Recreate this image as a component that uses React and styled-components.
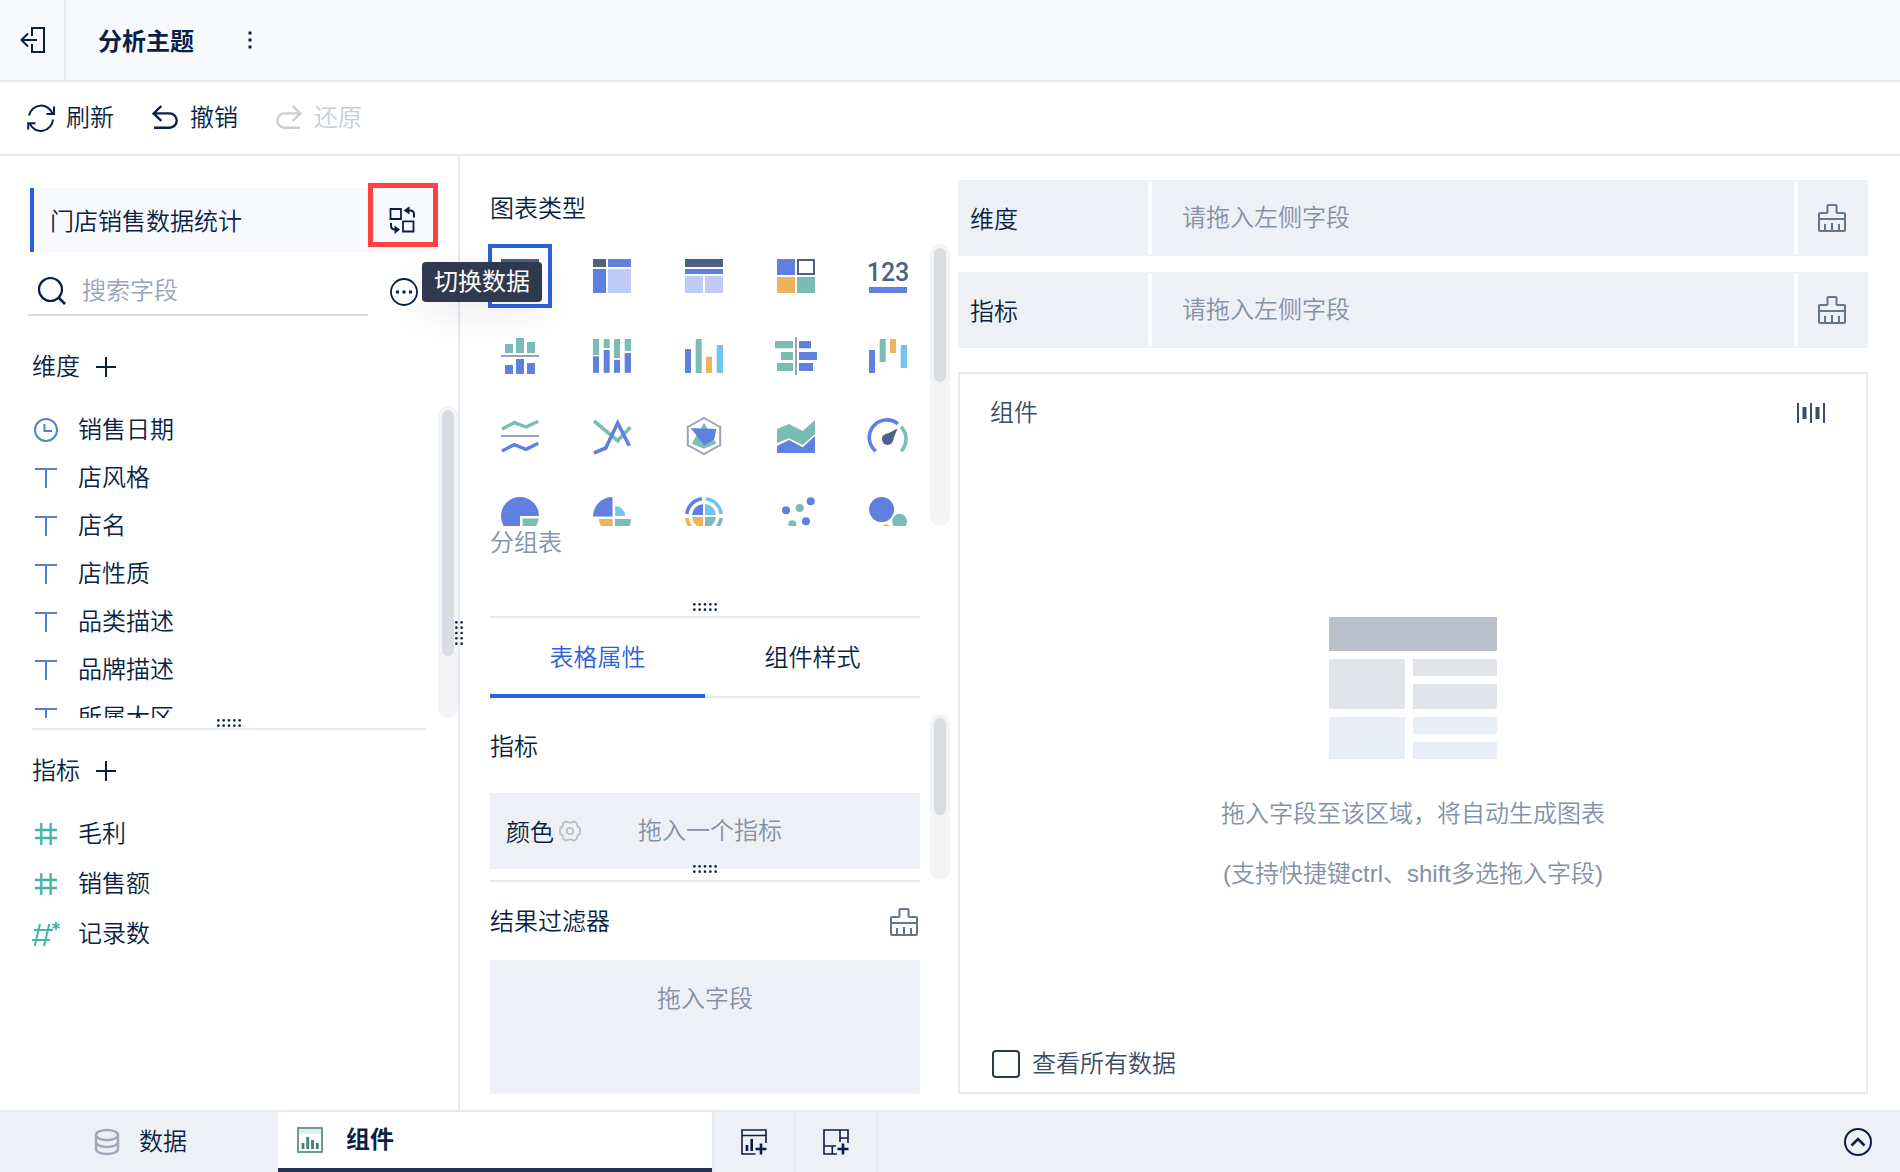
import React, { useState } from 'react';
import styled, { createGlobalStyle } from 'styled-components';

const GlobalStyle = createGlobalStyle`
  * {
    box-sizing: border-box;
  }

  body {
    margin: 0;
    background: #ffffff;
    color: #0a1f44;
    font-family: "Liberation Sans", "Noto Sans CJK SC", sans-serif;
    font-size: 24px;
    font-weight: 350;
    line-height: 32px;
  }

  button, input {
    font: inherit;
    color: inherit;
  }

  button {
    display: flex;
    align-items: center;
    padding: 0;
    border: none;
    background: none;
    cursor: pointer;
  }

  svg {
    display: block;
    flex: none;
    overflow: visible;
  }

  h1, h2, p, ul {
    margin: 0;
    padding: 0;
    font-size: 24px;
    font-weight: inherit;
  }
`;

const Page = styled.div`
  display: flex;
  flex-direction: column;
  min-height: 100vh;
`;

const Header = styled.header`
  display: flex;
  height: 82px;
  background: #f8f9fd;
  border-bottom: 2px solid #e6e9f0;
`;

const BackButton = styled.button`
  width: 66px;
  padding-left: 20px;
  border-right: 2px solid #e6e9f0;
`;

const Title = styled.h1`
  align-self: center;
  margin-left: 32px;
  padding-top: 4px;
  font-weight: 700;
`;

const MoreButton = styled.button`
  margin-left: 52px;
`;

const Toolbar = styled.div`
  display: flex;
  gap: 37px;
  height: 74px;
  padding-left: 27px;
  border-bottom: 2px solid #e6e9f0;
`;

const ToolButton = styled.button`
  gap: 11px;

  &:disabled {
    color: #c9cdd6;
    cursor: default;
  }
`;

const Body = styled.main`
  display: flex;
  flex: 1;
`;

/* Painel da esquerda */
const SidePanel = styled.aside`
  position: relative;
  display: flex;
  flex-direction: column;
  flex: none;
  width: 460px;
  padding-top: 32px;
  border-right: 2px solid #e6e9f0;
`;

const Source = styled.div`
  position: relative;
  display: flex;
  align-items: center;
  justify-content: space-between;
  height: 64px;
  margin: 0 24px 0 30px;
  padding: 0 18px 0 16px;
  background: #f8f9fd;
  border-left: 4px solid #2c60db;

  span {
    padding-top: 4px;
  }
`;

const Highlight = styled.div`
  position: absolute;
  top: -5px;
  right: -4px;
  width: 70px;
  height: 64px;
  border: 5px solid #fe4242;
  pointer-events: none;
`;

const Tooltip = styled.div`
  position: absolute;
  top: 74px;
  left: 388px;
  z-index: 2;
  padding: 4px 12px;
  border-radius: 4px;
  background: #2f3a4e;
  color: #ffffff;
  font-weight: 400;
  white-space: nowrap;
  box-shadow: 0 12px 36px rgba(20, 30, 60, 0.08);
`;

const SearchRow = styled.div`
  display: flex;
  justify-content: space-between;
  margin: 0 40px 0 28px;
`;

const SearchBox = styled.label`
  display: flex;
  align-items: center;
  gap: 16px;
  width: 340px;
  height: 64px;
  padding: 16px 0 0 10px;
  border-bottom: 2px solid #d9dde6;

  input {
    width: 260px;
    padding: 0;
    border: none;
    outline: none;
    background: none;
  }

  input::placeholder {
    color: #9aa3b4;
    opacity: 1;
  }
`;

const RoundButton = styled.button`
  padding-top: 16px;
`;

const GroupTitle = styled.div`
  display: flex;
  align-items: center;
  gap: 16px;
  padding: ${(props) => props.$padding};
`;

const ScrollRow = styled.div`
  display: flex;
  height: ${(props) => props.$height}px;
`;

const FieldList = styled.ul`
  flex: 1;
  overflow: hidden;
  list-style: none;
`;

const Field = styled.li`
  display: flex;
  align-items: center;
  gap: 20px;
  height: ${(props) => props.$height}px;
  padding-left: 34px;
`;

const Track = styled.div`
  flex: none;
  width: 20px;
  padding: 4px;
  border-radius: 10px;
  background: #f2f4f6;
`;

const Thumb = styled.div`
  height: ${(props) => props.$height}px;
  border-radius: 6px;
  background: #d9dce1;
`;

const Divider = styled.div`
  position: relative;
  height: 2px;
  margin: ${(props) => props.$margin};
  background: #e6e9f0;
`;

const Grip = styled.div`
  position: absolute;
  bottom: ${(props) => props.$lift}px;
  left: 50%;
  margin-left: -12px;
`;

const SideGrip = styled.div`
  position: absolute;
  top: 465px;
  right: -5px;
  z-index: 1;
`;

/* Painel do meio */
const ConfigPanel = styled.section`
  display: flex;
  flex-direction: column;
  flex: none;
  width: 498px;
  padding: 37px 8px 0 30px;
`;

const ChartGrid = styled.div`
  display: grid;
  grid-template-columns: repeat(5, 64px);
  grid-auto-rows: 64px;
  gap: 16px 28px;
  margin: 0 10px 0 -2px;
  overflow: hidden;
`;

const ChartButton = styled.button`
  justify-content: center;
  border: 4px solid ${(props) => (props.$active ? '#2c60db' : 'transparent')};
`;

const ChartName = styled.p`
  padding: 1px 0 57px;
  color: #8591a7;
`;

const Tabs = styled.div`
  display: flex;
  height: 80px;
  margin: 0 30px 16px 0;
`;

const Tab = styled.button`
  flex: 1;
  justify-content: center;
  color: ${(props) => (props.$active ? '#2c60db' : '#0a1f44')};
  box-shadow: inset 0 ${(props) => (props.$active ? '-4px #2c60db' : '-2px #e6e9f0')};
`;

const Props = styled.div`
  flex: 1;
  margin-right: 10px;

  h2 {
    padding: 17px 0 30px;
  }
`;

const ColorRow = styled.div`
  display: flex;
  align-items: center;
  height: 76px;
  padding-left: 16px;
  background: #edf0f5;

  button {
    margin: 0 57px 0 5px;
  }
`;

const ColorLabel = styled.span`
  padding-top: 3px;
`;

const Hint = styled.span`
  color: #8591a7;
`;

const FilterHead = styled.div`
  display: flex;
  align-items: center;
  justify-content: space-between;
  height: 78px;
  margin-right: 32px;
  padding-top: 2px;
`;

const FilterDrop = styled.div`
  flex: 1;
  min-height: 134px;
  margin: 0 30px 16px 0;
  padding-top: 23px;
  background: #edf0f5;
  text-align: center;
`;

/* Painel da direita */
const Stage = styled.section`
  display: flex;
  flex-direction: column;
  flex: 1;
  padding: 24px 32px 16px 0;
`;

const DropRow = styled.div`
  display: flex;
  height: 76px;
  margin-bottom: 16px;
  padding: 1px 0;
  background: #edf0f5;
`;

const DropLabel = styled.div`
  display: flex;
  align-items: center;
  width: 190px;
  padding: 4px 0 0 12px;
`;

const DropArea = styled.div`
  display: flex;
  flex: 1;
  align-items: center;
  padding-left: 30px;
  border: solid #ffffff;
  border-width: 0 4px;
`;

const ClearButton = styled.button`
  justify-content: center;
  width: 70px;
  padding-right: 2px;
`;

const Card = styled.div`
  display: flex;
  flex-direction: column;
  flex: 1;
  margin-top: 8px;
  padding: 23px 30px 12px 30px;
  border: 2px solid #e6e9f0;
  color: #3d4c67;
`;

const CardHead = styled.div`
  display: flex;
  align-items: center;
  justify-content: space-between;
  padding-right: 11px;
`;

const Empty = styled.div`
  display: flex;
  flex-direction: column;
  flex: 1;
  align-items: center;
  justify-content: center;
  padding-top: 44px;
  color: #8591a7;
  line-height: 60px;

  svg {
    margin-bottom: 25px;
  }
`;

const CheckLabel = styled.label`
  display: flex;
  align-items: center;
  gap: 12px;
  padding: 0 0 0 2px;

  input {
    appearance: none;
    width: 28px;
    height: 28px;
    margin: 0;
    border: 2px solid #2c3950;
    border-radius: 4px;
  }
`;

const Footer = styled.footer`
  display: flex;
  height: 62px;
  background: #edf0f5;
  border-top: 2px solid #e6e9f0;
`;

const DataTab = styled.button`
  gap: 20px;
  width: 278px;
  padding-left: 95px;
`;

const WidgetTab = styled.button`
  gap: 23px;
  width: 434px;
  padding-left: 19px;
  background: #ffffff;
  border-bottom: 4px solid #243150;
  font-weight: 700;
`;

const AddButton = styled.button`
  justify-content: center;
  width: 82px;
  border-left: 2px solid #e6e9f0;
`;

const FooterEnd = styled.div`
  display: flex;
  flex: 1;
  align-items: center;
  justify-content: flex-end;
  padding-right: 28px;
  border-left: 2px solid #e6e9f0;
`;

const BLUE = '#6080e1';
const GREEN = '#7bbdb5';
const ORANGE = '#eeb35f';
const SKY = '#72c3f0';
const DARK = '#4e6084';
const PALE = '#c0ccf6';
const GREY = '#9aa3b8';

const Icon = ({ w = 28, h = 28, color = 'currentColor', sw = 2, children }) => (
  <svg width={w} height={h} viewBox={`0 0 ${w} ${h}`} fill="none" stroke={color} strokeWidth={sw} aria-hidden="true">
    {children}
  </svg>
);

const Dots = ({ vertical }) => {
  const dots = [];
  for (let i = 0; i < 5; i++) {
    for (let j = 0; j < 2; j++) {
      const a = 1.33 + i * 5.33;
      const b = 1.33 + j * 5.33;
      dots.push(<circle key={`${i}${j}`} cx={vertical ? b : a} cy={vertical ? a : b} r="1.3" fill="#0f2344" stroke="none" />);
    }
  }
  return <Icon w={vertical ? 8 : 24} h={vertical ? 24 : 8}>{dots}</Icon>;
};

const PlusIcon = () => <Icon w={20} h={20}><path d="M10 0V20M0 10H20" /></Icon>;

const BrushIcon = () => (
  <Icon color="#66748c">
    <path d="M2 9H8.7Q9.5 9 9.5 8.2V2Q9.5 1 10.5 1H17.5Q18.5 1 18.5 2V8.2Q18.5 9 19.3 9H26Q27 9 27 10V26Q27 27 26 27H2Q1 27 1 26V10Q1 9 2 9ZM1 15H27M7 20V27M14 19V27M21 20V27" />
  </Icon>
);

const UndoPath = 'M10.3 2L2.6 9.4L10.3 16.8M2.6 9.4H18.5A7.2 7.2 0 0 1 18.5 23.8H3';

const FieldIcon = ({ type }) => {
  if (type === 'date') {
    return <Icon w={24} h={24} color="#5580cc"><circle cx="12" cy="12" r="11" /><path d="M10.5 6V13H18" /></Icon>;
  }
  if (type === 'text') {
    return <Icon w={24} h={24} color="#5580cc"><path d="M1 3H23M12 3V22" /></Icon>;
  }
  if (type === 'number') {
    return <Icon w={24} h={24} color="#43b5a8" sw={2.3}><path d="M1 8H23M1 16H23M7.3 1V23M16.7 1V23" /></Icon>;
  }
  return (
    <Icon w={24} h={24} color="#43b5a8">
      <path d="M0 8H19M-2 18H16M6 2L.7 24M15.3 2L10 24" />
      <path d="M22 0V8M18.5 2L25.5 6M25.5 2L18.5 6" strokeWidth="1.8" />
    </Icon>
  );
};

const Bars = ({ items }) => items.map(([x, y, w, h, fill]) => (
  <rect key={`${x}-${y}`} x={x} y={y} width={w} height={h} fill={fill} stroke="none" />
));

const charts = [
  { name: '分组表', draw: <Bars items={[[1, 3, 38, 8, DARK], [1, 13, 13, 24, BLUE], [16, 13, 23, 24, PALE]]} /> },
  { name: '交叉表', draw: <Bars items={[[1, 3, 13, 8, DARK], [16, 3, 23, 8, BLUE], [1, 13, 13, 24, BLUE], [16, 13, 23, 24, PALE]]} /> },
  { name: '明细表', draw: <Bars items={[[1, 3, 38, 8, DARK], [1, 13, 38, 5, BLUE], [1, 20, 18, 17, PALE], [21, 20, 18, 17, PALE]]} /> },
  {
    name: '颜色表格',
    draw: (
      <>
        <Bars items={[[1, 3, 18, 16, BLUE], [1, 21, 18, 16, ORANGE], [21, 21, 18, 16, GREEN]]} />
        <rect x="22" y="4" width="16" height="14" stroke={DARK} />
      </>
    ),
  },
  {
    name: 'KPI指标卡',
    draw: (
      <>
        <text x="20" y="25" fill={DARK} stroke="none" textAnchor="middle" fontSize="25" fontWeight="500" fontFamily="Roboto, sans-serif">123</text>
        <Bars items={[[1, 31, 38, 6, BLUE]]} />
      </>
    ),
  },
  {
    name: '对比柱状图',
    draw: <Bars items={[[5, 8, 8, 9, GREEN], [16, 2, 8, 15, GREEN], [27, 6, 8, 11, GREEN], [1, 19, 38, 2, GREY], [5, 29, 8, 9, BLUE], [16, 23, 8, 15, BLUE], [27, 27, 8, 11, BLUE]]} />,
  },
  {
    name: '堆积柱状图',
    draw: <Bars items={[[1, 3, 6, 16, GREEN], [11.7, 3, 6, 9, GREEN], [22, 3, 6, 19, GREEN], [32.7, 3, 6.3, 12, GREEN], [1, 20.3, 6, 16.5, BLUE], [11.7, 14, 6, 22.8, BLUE], [22, 24, 6, 12.8, BLUE], [32.7, 17, 6.3, 19.8, BLUE]]} />,
  },
  { name: '分区柱状图', draw: <Bars items={[[1, 13, 6, 24, BLUE], [11.7, 3, 6, 34, GREEN], [22, 20.7, 6, 16.3, ORANGE], [32.7, 9, 6.3, 28, SKY]]} /> },
  {
    name: '对比条形图',
    draw: <Bars items={[[-1, 5, 18, 7.3, GREEN], [5, 16, 12, 8, GREEN], [1, 27, 16, 8, GREEN], [19, 1, 2, 38, GREY], [23, 5, 12, 7.3, BLUE], [23, 16, 18, 8, BLUE], [23, 27, 14, 8, BLUE]]} />,
  },
  { name: '瀑布图', draw: <Bars items={[[1, 14, 6, 23, BLUE], [11.7, 3, 6, 23, GREEN], [22, 3, 6, 14, ORANGE], [32.7, 9, 6.3, 23, SKY]]} /> },
  {
    name: '范围面积图',
    draw: (
      <>
        <path d="M2 13L14.3 6.7L26 11L38.3 5.3" stroke={GREEN} strokeWidth="3.4" />
        <path d="M1 20H39" stroke={GREY} />
        <path d="M2 35L14.3 28.7L26 33.3L38.3 27.3" stroke={BLUE} strokeWidth="3.4" />
      </>
    ),
  },
  {
    name: '折线图',
    draw: (
      <>
        <path d="M2 5L25.7 24.7L38.3 11.3" stroke={GREEN} strokeWidth="3.6" />
        <path d="M2 37L13.7 32L25.7 7L37.3 29.7" stroke={BLUE} strokeWidth="3.6" />
      </>
    ),
  },
  {
    name: '雷达图',
    draw: (
      <>
        <path d="M20 2L36.2 11V29L20 38L3.8 29V11Z" stroke={GREY} />
        <path d="M20 6.7L32.3 27.5L20 32.8L7.7 27.7Z" fill={GREEN} stroke="none" />
        <path d="M6.7 12L32.3 13L30.3 23.3L20.3 29.5Z" fill={BLUE} stroke="none" />
      </>
    ),
  },
  {
    name: '面积图',
    draw: (
      <>
        <path d="M1 13L13 8L26.7 15L39 4V18L26.7 29L13 22.3L1 27Z" fill={GREEN} stroke="none" />
        <path d="M1 30L13 24L26.7 31.3L39 20V37H1Z" fill={BLUE} stroke="none" />
      </>
    ),
  },
  {
    name: '仪表盘',
    draw: (
      <>
        <path d="M7.8 35.2A17.3 17.3 0 0 1 30 7.8" stroke={BLUE} strokeWidth="3.6" />
        <path d="M33 10.8A17.3 17.3 0 0 1 33 35.2" stroke={GREEN} strokeWidth="3.6" />
        <circle cx="19.6" cy="23.3" r="5.7" fill={DARK} stroke="none" />
        <path d="M17 19L29.5 12.5L24.5 25Z" fill={DARK} stroke="none" />
      </>
    ),
  },
  {
    name: '饼图',
    draw: (
      <>
        <path d="M20 20H39A19 19 0 1 0 20 39Z" fill={BLUE} stroke="none" />
        <path d="M22.5 22.5H38.8A19 19 0 0 1 22.5 38.8Z" fill={GREEN} stroke="none" />
      </>
    ),
  },
  {
    name: '玫瑰图',
    draw: (
      <>
        <path d="M20.5 20.5H1A19.5 19.5 0 0 1 20.5 1Z" fill={BLUE} stroke="none" />
        <path d="M23.2 20V10A10 10 0 0 1 33.3 20Z" fill={SKY} stroke="none" />
        <path d="M20.7 23V36.7A13.7 13.7 0 0 1 7 23Z" fill={ORANGE} stroke="none" />
        <path d="M23 23H39A16 16 0 0 1 23 39Z" fill={GREEN} stroke="none" />
      </>
    ),
  },
  {
    name: '多层饼图',
    draw: (
      <>
        <g strokeWidth="3.6">
          <path d="M2.8 18A17.3 17.3 0 0 1 18 2.8" stroke={BLUE} />
          <path d="M22 2.8A17.3 17.3 0 0 1 37.2 18" stroke={SKY} />
          <path d="M37.2 22A17.3 17.3 0 0 1 22 37.2" stroke={GREEN} />
          <path d="M18 37.2A17.3 17.3 0 0 1 2.8 22" stroke={ORANGE} />
        </g>
        <g stroke="none">
          <path d="M19 19H8A12 12 0 0 1 19 8Z" fill={BLUE} />
          <path d="M21 19H32A12 12 0 0 0 21 8Z" fill={SKY} />
          <path d="M19 21H8A12 12 0 0 0 19 32Z" fill={ORANGE} />
          <path d="M21 21H32A12 12 0 0 1 21 32Z" fill={GREEN} />
        </g>
      </>
    ),
  },
  {
    name: '散点图',
    draw: (
      <g stroke="none">
        <circle cx="10" cy="14.3" r="4" fill={BLUE} />
        <circle cx="23.7" cy="12" r="4" fill={GREEN} />
        <circle cx="34.7" cy="5.3" r="4" fill={BLUE} />
        <circle cx="30" cy="25.3" r="4" fill={BLUE} />
        <circle cx="16.3" cy="28.3" r="4" fill={GREEN} />
      </g>
    ),
  },
  {
    name: '聚合气泡图',
    draw: (
      <g stroke="none">
        <circle cx="13.6" cy="13.6" r="12.5" fill={BLUE} />
        <circle cx="31.6" cy="25.3" r="7.5" fill={GREEN} />
        <circle cx="18.3" cy="32.4" r="4.2" fill={ORANGE} />
      </g>
    ),
  },
];

const dimensions = [
  { name: '销售日期', type: 'date' },
  { name: '店风格', type: 'text' },
  { name: '店名', type: 'text' },
  { name: '店性质', type: 'text' },
  { name: '品类描述', type: 'text' },
  { name: '品牌描述', type: 'text' },
  { name: '所属大区', type: 'text' },
];

const measures = [
  { name: '毛利', type: 'number' },
  { name: '销售额', type: 'number' },
  { name: '记录数', type: 'count' },
];

const Sidebar = () => (
  <SidePanel>
    <Source>
      <span>门店销售数据统计</span>
      <button type="button" aria-label="切换数据">
        <Icon>
          <path d="M2.5 3H13V13H2.5ZM15 15.3H25.5V25.5H15Z" strokeWidth="1.8" />
          <path d="M19 4.5H22Q26 4.5 26 8.5V11.5M3 17V19.5Q3 23.5 7 23.5H9" />
          <path d="M15.5 4.5L21.5 .3V8.5ZM12 23.5L6.5 19.5V28Z" fill="currentColor" stroke="none" />
        </Icon>
      </button>
      <Highlight />
      <Tooltip role="tooltip">切换数据</Tooltip>
    </Source>

    <SearchRow>
      <SearchBox>
        <Icon sw={2.2}><circle cx="12.5" cy="12.5" r="11.5" /><path d="M20.5 20.5L27 27" strokeWidth="2.6" /></Icon>
        <input type="text" placeholder="搜索字段" aria-label="搜索字段" />
      </SearchBox>
      <RoundButton type="button" aria-label="更多">
        <Icon sw={1.8}>
          <circle cx="14" cy="14" r="13" />
          <path d="M6 14H9M12.5 14H15.5M19 14H22" strokeWidth="3" />
        </Icon>
      </RoundButton>
    </SearchRow>

    <GroupTitle $padding="35px 0 23px 32px">
      <h2>维度</h2>
      <button type="button" aria-label="添加维度"><PlusIcon /></button>
    </GroupTitle>
    <ScrollRow $height={312}>
      <FieldList>
        {dimensions.map((f) => (
          <Field key={f.name} $height={48}><FieldIcon type={f.type} />{f.name}</Field>
        ))}
      </FieldList>
      <Track><Thumb $height={246} /></Track>
    </ScrollRow>
    <Divider $margin="10px 32px 0 32px"><Grip $lift={3}><Dots /></Grip></Divider>

    <GroupTitle $padding="25px 0 22px 32px">
      <h2>指标</h2>
      <button type="button" aria-label="添加指标"><PlusIcon /></button>
    </GroupTitle>
    <FieldList>
      {measures.map((f) => (
        <Field key={f.name} $height={50}><FieldIcon type={f.type} />{f.name}</Field>
      ))}
    </FieldList>
    <SideGrip><Dots vertical /></SideGrip>
  </SidePanel>
);

const Config = () => {
  const [chart, setChart] = useState('分组表');
  const [tab, setTab] = useState('表格属性');

  return (
    <ConfigPanel>
      <GroupTitle $padding="0 0 19px"><h2>图表类型</h2></GroupTitle>
      <ScrollRow $height={282}>
        <ChartGrid>
          {charts.map((c) => (
            <ChartButton key={c.name} type="button" aria-label={c.name} $active={chart === c.name} onClick={() => setChart(c.name)}>
              <Icon w={40} h={40}>{c.draw}</Icon>
            </ChartButton>
          ))}
        </ChartGrid>
        <Track><Thumb $height={134} /></Track>
      </ScrollRow>
      <ChartName>{chart}</ChartName>

      <Divider $margin="0 30px 0 0"><Grip $lift={7}><Dots /></Grip></Divider>
      <Tabs>
        {['表格属性', '组件样式'].map((name) => (
          <Tab key={name} type="button" $active={tab === name} onClick={() => setTab(name)}>{name}</Tab>
        ))}
      </Tabs>

      <ScrollRow $height={166}>
        <Props>
          <h2>指标</h2>
          <ColorRow>
            <ColorLabel>颜色</ColorLabel>
            <button type="button" aria-label="颜色设置">
              <Icon w={22} h={22} color="#b9c0cc" sw={1.8}>
                <path d="M7 1.3Q11 4 15 1.3L18 3.3Q17.8 7 21 8.3V13.7Q17.8 15 18 18.7L15 20.7Q11 18 7 20.7L4 18.7Q4.2 15 1 13.7V8.3Q4.2 7 4 3.3Z" />
                <circle cx="11" cy="11" r="3.2" />
              </Icon>
            </button>
            <Hint>拖入一个指标</Hint>
          </ColorRow>
        </Props>
        <Track><Thumb $height={97} /></Track>
      </ScrollRow>
      <Divider $margin="0 30px 0 0"><Grip $lift={9}><Dots /></Grip></Divider>

      <FilterHead>
        <h2>结果过滤器</h2>
        <button type="button" aria-label="清空过滤器"><BrushIcon /></button>
      </FilterHead>
      <FilterDrop><Hint>拖入字段</Hint></FilterDrop>
    </ConfigPanel>
  );
};

const Preview = () => (
  <Stage>
    {['维度', '指标'].map((name) => (
      <DropRow key={name}>
        <DropLabel>{name}</DropLabel>
        <DropArea><Hint>请拖入左侧字段</Hint></DropArea>
        <ClearButton type="button" aria-label={`清空${name}`}><BrushIcon /></ClearButton>
      </DropRow>
    ))}
    <Card>
      <CardHead>
        <h2>组件</h2>
        <button type="button" aria-label="自适应显示">
          <Icon w={28} h={20}>
            <path d="M1 0V20M14 0V20M27 0V20" />
            <path d="M7.5 4V16M20.5 4V16" strokeWidth="4" />
          </Icon>
        </button>
      </CardHead>
      <Empty>
        <Icon w={168} h={142}>
          <Bars
            items={[
              [0, 0, 168, 34, '#bac1cc'],
              [0, 42, 76, 50, '#e1e5ea'],
              [84, 42, 84, 17, '#e1e5ea'],
              [84, 67, 84, 25, '#e1e5ea'],
              [0, 100, 76, 42, '#e8edf7'],
              [84, 100, 84, 17, '#e8edf7'],
              [84, 125, 84, 17, '#e8edf7'],
            ]}
          />
        </Icon>
        <p>拖入字段至该区域，将自动生成图表</p>
        <p>(支持快捷键ctrl、shift多选拖入字段)</p>
      </Empty>
      <CheckLabel>
        <input type="checkbox" />
        查看所有数据
      </CheckLabel>
    </Card>
  </Stage>
);

const App = () => (
  <>
    <GlobalStyle />
    <Page>
      <Header>
        <BackButton type="button" aria-label="返回">
          <Icon w={26} h={26}>
            <path d="M12 9V1H24V25H12V17M1.5 13H17M8 6.5L1.5 13L8 19.5" />
          </Icon>
        </BackButton>
        <Title>分析主题</Title>
        <MoreButton type="button" aria-label="更多操作">
          <Icon w={8} h={20}><path d="M4 1.5V4.5M4 8.5V11.5M4 15.5V18.5" strokeWidth="3" /></Icon>
        </MoreButton>
      </Header>

      <Toolbar>
        <ToolButton type="button">
          <Icon>
            <path d="M2 11.5A12.2 12.2 0 0 1 25.5 9.8M26 15.5A12.2 12.2 0 0 1 2.5 19.2M27 2.5V10.1H19.5M1.2 25.5V19.2H8.5" />
          </Icon>
          刷新
        </ToolButton>
        <ToolButton type="button">
          <Icon sw={2.4}><path d={UndoPath} /></Icon>
          撤销
        </ToolButton>
        <ToolButton type="button" disabled>
          <Icon sw={2.4}><path d={UndoPath} transform="translate(28 0) scale(-1 1)" /></Icon>
          还原
        </ToolButton>
      </Toolbar>

      <Body>
        <Sidebar />
        <Config />
        <Preview />
      </Body>

      <Footer>
        <DataTab type="button">
          <Icon w={24} h={26} color="#a0a7b7" sw={2.4}>
            <ellipse cx="12" cy="6" rx="11" ry="5" />
            <path d="M1 6V20C1 23 6 25 12 25S23 23 23 20V6M1 13C1 16 6 18 12 18S23 16 23 13" />
          </Icon>
          数据
        </DataTab>
        <WidgetTab type="button">
          <Icon w={26} h={26} color="#5c8f8a" sw={1.8}>
            <rect x="1" y="1" width="24" height="24" />
            <rect x="2" y="2" width="22" height="5" fill="#dcefed" stroke="none" />
            <path d="M6 16V22M10.7 10V22M15.5 13V22M20.3 16V22" strokeWidth="2.8" stroke="#3f807a" />
          </Icon>
          组件
        </WidgetTab>
        <AddButton type="button" aria-label="添加组件">
          <Icon w={26} h={26} sw={1.6}>
            <path d="M14.5 25H1V1H25V14M1 6.5H25" />
            <path d="M6 16V22M10.7 10V22M20 14.5V25.5M14.5 20H25.5" strokeWidth="2.6" />
          </Icon>
        </AddButton>
        <AddButton type="button" aria-label="添加仪表板">
          <Icon w={26} h={26} sw={1.6}>
            <path d="M14 25H1V1H25V14M17 1V13M17 9H25M1 17H13M9.3 17V25" />
            <path d="M20 14.5V25.5M14.5 20H25.5" strokeWidth="2.6" />
          </Icon>
        </AddButton>
        <FooterEnd>
          <button type="button" aria-label="展开">
            <Icon>
              <circle cx="14" cy="14" r="13" />
              <path d="M7.5 17.5L14 11L20.5 17.5" strokeWidth="2.6" />
            </Icon>
          </button>
        </FooterEnd>
      </Footer>
    </Page>
  </>
);

export default App;
